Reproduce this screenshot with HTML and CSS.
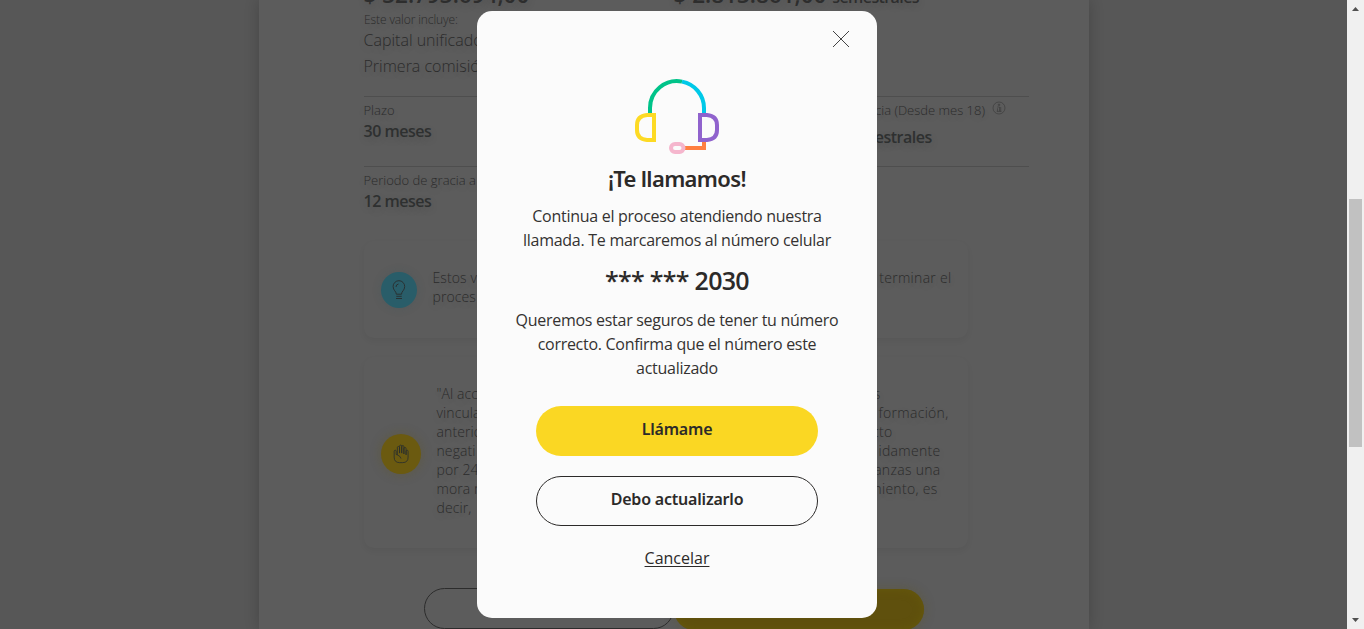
FILE: index.html
```html
<!DOCTYPE html>
<html lang="es">
<head>
<meta charset="utf-8">
<title>Te llamamos</title>
<link rel="stylesheet" href="styles.css">
</head>
<body>
<div class="viewport">
  <div class="page">
    <main class="sheet">
      <section class="amounts">
        <div class="amount">$ 32.793.694,00</div>
        <div class="amount">$ 2.813.861,00 <small>semestrales</small></div>
      </section>
      <p class="includes">Este valor incluye:</p>
      <p class="item">Capital unificado</p>
      <p class="item item-last">Primera comisión</p>
      <section class="terms">
        <div class="term"><span class="label">Plazo</span><strong>30 meses</strong></div>
        <div class="term term-right">
          <span class="label">gracia (Desde mes 18)
            <svg class="info" viewBox="0 0 14 14"><circle cx="7" cy="7" r="6"/><path d="M5.300 6h2.200v4.200M4.800 10.400h4.600M6.300 3.200h1.400v1.200H6.300zM5.500 7.300v3M8.700 6v4.400"/></svg>
          </span>
          <strong>semestrales</strong>
        </div>
      </section>
      <section class="terms terms-second">
        <div class="term"><span class="label">Periodo de gracia a</span><strong>12 meses</strong></div>
      </section>
      <section class="note note-tip">
        <div class="bubble blue">
          <svg viewBox="0 0 20 20"><path d="M7.300 14.200c0-3-3.200-3.800-3.200-7.700a5.800 5.800 0 0 1 11.600 0c0 3.900-3.200 4.700-3.200 7.700zM7.300 16.300h5.400M7 18.500h6M7 7a3 3 0 0 1 2.500-3"/></svg>
        </div>
        <div class="lines">
          <div class="line w-tip"><span>Estos v</span><span>terminar el</span></div>
          <div class="line"><span>proces</span></div>
        </div>
      </section>
      <section class="note note-legal">
        <div class="bubble yellow">
          <svg viewBox="0 0 20 22"><path d="M6 12V4q0-1.300 1.200-1.300T8.400 4v6V2.500q0-1.300 1.200-1.300t1.200 1.300V10V3q0-1.300 1.200-1.300T13.200 3v8V5q0-1.200 1.200-1.200T15.600 5v7V8q0-1.200 1.100-1.200T17.800 8v6.500q0 6-6 6H8.500q-6 0-6-6V8q0-1.200 1.100-1.200T4.700 8v3.500l1.300.5q3.200 1 4 4"/></svg>
        </div>
        <div class="lines">
          <div class="line w1"><span>"Al acc</span><span>s</span></div>
          <div class="line w2"><span>vincula</span><span>formación,</span></div>
          <div class="line w3"><span>anterio</span><span>cto</span></div>
          <div class="line w4"><span>negati</span><span>idamente</span></div>
          <div class="line w4"><span>por 24</span><span>anzas una</span></div>
          <div class="line w5"><span>mora m</span><span>miento, es</span></div>
          <div class="line"><span>decir,</span></div>
        </div>
      </section>
      <div class="page-actions"><div class="ghost"></div><div class="solid"></div></div>
    </main>
  </div>
  <aside class="scrollbar">
    <svg class="arrow" viewBox="0 0 17 17"><path d="M5 11h7L8.500 7z"/></svg>
    <div class="thumb"></div>
    <svg class="arrow" viewBox="0 0 17 17"><path d="M5 6h7L8.500 10z"/></svg>
  </aside>
</div>
<div class="overlay">
  <div class="modal" role="dialog">
    <svg class="close" viewBox="0 0 18 18"><path d="M1 1l16 16M17 1L1 17"/></svg>
    <svg class="headset" viewBox="0 0 84 76">
      <path d="M15 35V29A27 27 0 0 1 47 2.600" stroke="#00c389"/>
      <path d="M47 2.600A27 27 0 0 1 69 29V35" stroke="#00c9e8"/>
      <path d="M19 36V61H12Q2 60 2 51V46Q2 37 12 36Z" stroke="#fdda24"/>
      <path d="M65 36V61H72Q82 60 82 51V46Q82 37 72 36Z" stroke="#9063cd"/>
      <path d="M50 69H69V63" stroke="#ff7f41"/>
      <rect x="36" y="65" width="12.500" height="8" rx="4" stroke="#f5b6cd"/>
    </svg>
    <h1>¡Te llamamos!</h1>
    <p class="copy">Continua el proceso atendiendo nuestra<br>llamada. Te marcaremos al número celular</p>
    <div class="phone">*** *** 2030</div>
    <p class="copy">Queremos estar seguros de tener tu número<br>correcto. Confirma que el número este<br>actualizado</p>
    <button class="btn primary">Llámame</button>
    <button class="btn secondary">Debo actualizarlo</button>
    <a class="cancel">Cancelar</a>
  </div>
</div>
</body>
</html>
```
FILE: styles.css
```css
* { box-sizing: border-box; }
body { margin: 0; height: 629px; overflow: hidden; font-family: "Open Sans", sans-serif; color: #2c2a29; }
p, h1 { margin: 0; }
svg { fill: none; display: block; flex: none; }
.viewport { display: flex; height: 629px; overflow: hidden; }
.page { flex: 1; background: #575757; overflow: hidden; }
.sheet { display: flex; flex-direction: column; width: 830px; height: 629px; margin-left: 259px; padding: 0 60px 0 105px; background: #5c5c5c; box-shadow: 0 0 14px rgba(0,0,0,.2); color: #2b2b2b; font-weight: 300; text-shadow: 0 3px 8px rgba(0,0,0,.13); }
.sheet > * { flex: none; }
.amounts { display: grid; grid-template-columns: 310px 1fr; margin-top: -20px; height: 31px; }
.amount { font-size: 22.5px; line-height: 30px; font-weight: 600; white-space: nowrap; color: #2d2d2d; margin-left: -.5px; }
.amount small { font-size: 16px; letter-spacing: -.6px; }
.includes { font-size: 12px; line-height: 18px; letter-spacing: -.1px; }
.item { font-size: 16px; line-height: 26px; margin-top: -2px; margin-left: -.5px; }
.item-last { margin-top: 0; margin-bottom: 17px; }
.terms { display: flex; justify-content: space-between; height: 70px; border-top: 1px solid #4e4e4e; padding-top: 4px; }
.term { display: flex; flex-direction: column; margin-left: -.5px; }
.label { display: flex; font-size: 13px; line-height: 19px; }
.term strong { font-size: 16px; line-height: 23px; font-weight: 600; letter-spacing: -.5px; color: #2e3030; }
.term-right { width: 181px; }
.term-right .label { justify-content: flex-end; gap: 7px; padding-right: 23px; white-space: nowrap; }
.term-right strong { margin: 6px 0 0 -4px; }
.info { width: 14px; height: 14px; stroke: #3c3c3c; stroke-width: .7; }
.note { display: flex; align-items: center; width: 604px; border-radius: 10px; padding-left: 17px; box-shadow: 0 3px 6px rgba(0,0,0,.05); font-size: 14px; line-height: 19px; }
.note-tip { height: 97px; margin-top: 5px; gap: 15.5px; }
.note-tip .lines { padding-bottom: 5px; }
.note-legal { height: 191px; margin-top: 19px; gap: 15.5px; }
.note-legal .lines { padding-bottom: 4px; }
.bubble { display: flex; align-items: center; justify-content: center; border-radius: 50%; flex: none; }
.bubble svg { stroke: #292d2d; stroke-width: .9; width: 20px; height: 20px; }
.blue { width: 36px; height: 36px; background: #295d69; box-shadow: 0 0 10px rgba(40,80,90,.2); }
.yellow { width: 40px; height: 40px; margin-top: 2px; background: #6b5a10; box-shadow: 0 0 12px rgba(100,84,10,.3); }
.line { display: flex; justify-content: space-between; white-space: nowrap; letter-spacing: .1px; }
.line span + span { letter-spacing: .3px; }
.w-tip { width: 519px; }
.w1 { width: 444px; }
.w2 { width: 512px; }
.w3 { width: 456px; }
.w4 { width: 504px; }
.w5 { width: 501px; }
.page-actions { display: flex; margin: 40px 0 0 60px; }
.ghost, .solid { width: 250px; height: 41px; border-radius: 21px; }
.ghost { border: 1px solid #2c2c2c; }
.solid { margin-top: 1px; background: #5f500d; box-shadow: 0 0 12px rgba(92,80,10,.3), inset 0 0 10px #66590c; }
.scrollbar { display: flex; flex-direction: column; width: 17px; background: #f0f0f0; }
.arrow { width: 17px; height: 17px; fill: #505050; }
.thumb { width: 13px; height: 248px; margin: 182px 2px 165px; background: #c1c1c1; }
.overlay { position: absolute; inset: 0 17px 0 0; padding: 11px 70px 0 477px; }
.modal { display: flex; flex-direction: column; align-items: center; width: 400px; height: 607px; background: #fbfbfb; border-radius: 15px; text-align: center; }
.close { width: 18px; height: 18px; margin: 19px 27px 0 0; align-self: flex-end; stroke: #444; stroke-width: 1; }
.headset { width: 84px; height: 76px; margin-top: 31px; stroke-width: 4; }
h1 { font-family: "Noto Sans", sans-serif; font-size: 22px; line-height: 30px; margin-top: 8px; font-weight: 600; letter-spacing: -.65px; }
.copy { font-size: 16px; line-height: 24px; letter-spacing: -.28px; color: #343231; white-space: nowrap; }
h1 + .copy { margin-top: 11px; }
.phone { font-size: 25px; line-height: 32px; font-weight: 600; letter-spacing: -.7px; margin: 12px 0; }
.btn { width: 282px; height: 50px; border-radius: 25px; padding: 0 0 5px; font: 600 16px "Noto Sans", sans-serif; letter-spacing: -.2px; color: #2c2a29; }
.primary { border: 0; background: #fad723; margin-top: 26px; }
.secondary { border: 1px solid #2c2a29; background: transparent; margin-top: 20px; }
.cancel { margin-top: 20px; font-size: 16px; line-height: 24px; text-decoration: underline; text-underline-offset: 2px; }
```
